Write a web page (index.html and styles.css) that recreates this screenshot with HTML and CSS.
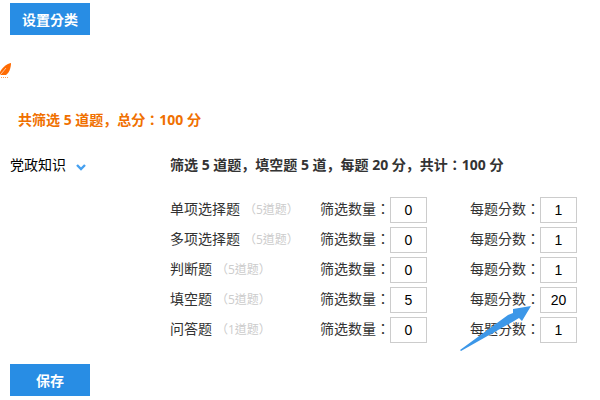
FILE: index.html
```
<!DOCTYPE html>
<html lang="zh-CN">
<head>
    <meta charset="UTF-8">
    <meta name="viewport" content="width=device-width, initial-scale=1.0">
    <title>设置分类</title>
    <link rel="stylesheet" href="styles.css">
</head>
<body>

<button type="button" class="btn">设置分类</button>

<!-- Section marker -->
<svg class="leaf" width="12" height="16" viewBox="0 0 12 16" aria-hidden="true">
    <path d="M0 9 C2 5 6 1 11 0 C11 5 9 10 6 12 L1 12 L0 11 Z" fill="#ff6a00"/>
    <path d="M1 11 L6 5" stroke="#ffc299" stroke-width="1" fill="none"/>
    <path d="M1 14.5 H8" stroke="#ff9a55" stroke-width="1" stroke-dasharray="1 1" fill="none"/>
</svg>

<p class="total">共筛选 5 道题，总分：100 分</p>

<form class="rules">
    <div class="category">
        <button type="button" class="category-name">党政知识
            <svg width="10" height="7" viewBox="0 0 10 7" aria-hidden="true">
                <path d="M1 1 L5 5 L9 1" stroke="#45a0f0" stroke-width="2.4" fill="none"/>
            </svg>
        </button>
        <div class="detail">
            <h3>筛选 5 道题，填空题 5 道，每题 20 分，共计：100 分</h3>
            <div class="row">
                <div>单项选择题<span class="count">（5道题）</span></div>
                <div><label for="num1">筛选数量：</label><input type="text" id="num1" value="0"></div>
                <div><label for="score1">每题分数：</label><input type="text" id="score1" value="1"></div>
            </div>
            <div class="row">
                <div>多项选择题<span class="count">（5道题）</span></div>
                <div><label for="num2">筛选数量：</label><input type="text" id="num2" value="0"></div>
                <div><label for="score2">每题分数：</label><input type="text" id="score2" value="1"></div>
            </div>
            <div class="row">
                <div>判断题<span class="count">（5道题）</span></div>
                <div><label for="num3">筛选数量：</label><input type="text" id="num3" value="0"></div>
                <div><label for="score3">每题分数：</label><input type="text" id="score3" value="1"></div>
            </div>
            <div class="row">
                <div>填空题<span class="count">（5道题）</span></div>
                <div><label for="num4">筛选数量：</label><input type="text" id="num4" value="5"></div>
                <div class="pointed">
                    <label for="score4">每题分数：</label><input type="text" id="score4" value="20">
                    <svg class="arrow" width="72" height="46" viewBox="0 0 72 46" aria-hidden="true">
                        <path d="M0 44 L48 9 L53 7 L53 3 L71 0 L62 15 L59 12 L54 15 L1 45 Z" fill="#3c97e8"/>
                    </svg>
                </div>
            </div>
            <div class="row">
                <div>问答题<span class="count">（1道题）</span></div>
                <div><label for="num5">筛选数量：</label><input type="text" id="num5" value="0"></div>
                <div><label for="score5">每题分数：</label><input type="text" id="score5" value="1"></div>
            </div>
        </div>
    </div>
    <button type="button" class="btn">保存</button>
</form>

</body>
</html>
```
FILE: styles.css
```
* {
    box-sizing: border-box;
}
body {
    margin: 0;
    padding: 3px 10px 0;
    background: #fff;
    color: #333;
    font-family: "Open Sans", "Noto Sans CJK TC", sans-serif;
    font-feature-settings: "locl" 0; /* keeps the colons centred */
    font-size: 14px;
    line-height: 30px;
}
button,
input {
    font-family: inherit;
    font-feature-settings: inherit;
    font-size: 14px;
}
.btn {
    display: block;
    width: 80px;
    height: 32px;
    padding: 0;
    border: none;
    background: #288de4;
    color: #fff;
    font-weight: bold;
    cursor: pointer;
}
.leaf {
    display: block;
    margin: 28px 0 0 -10px;
}
.total,
.detail h3 {
    font-family: "Open Sans", "Noto Sans CJK JP", sans-serif;
    font-size: 14px;
    font-weight: bold;
}
.total {
    margin: 26px 0 0;
    padding-left: 8px;
    color: #f07000;
}

/* Category name on the left, its rules on the right */
.category {
    display: flex;
    margin: 15px 0 21px;
}
.category-name {
    display: flex;
    align-items: center;
    gap: 10px;
    flex: 0 0 160px;
    height: 28px;
    padding: 0;
    border: none;
    background: none;
    color: #000;
    cursor: pointer;
}
.category-name svg {
    margin-top: 6px;
}
.detail {
    flex: 1;
}
.detail h3 {
    margin: 0 0 13px;
}
.row {
    display: grid;
    grid-template-columns: 150px 150px 1fr;
    height: 30px;
    white-space: nowrap;
}
.row > div {
    display: flex;
    align-items: center;
}
.row label {
    width: 70px;
}
.row input {
    width: 37px;
    height: 26px;
    margin-top: 2px;
    padding: 0;
    border: 1px solid #ccc;
    background: #fff;
    color: #000;
    font-family: "Liberation Sans", Arial, sans-serif;
    text-align: center;
}
.count {
    margin: 2px 0 0 4px;
    color: #ccc;
    font-size: 12px;
}

/* Arrow that points at the score box */
.pointed {
    position: relative;
}
.arrow {
    position: absolute;
    top: 23px;
    left: -10px;
}
```
